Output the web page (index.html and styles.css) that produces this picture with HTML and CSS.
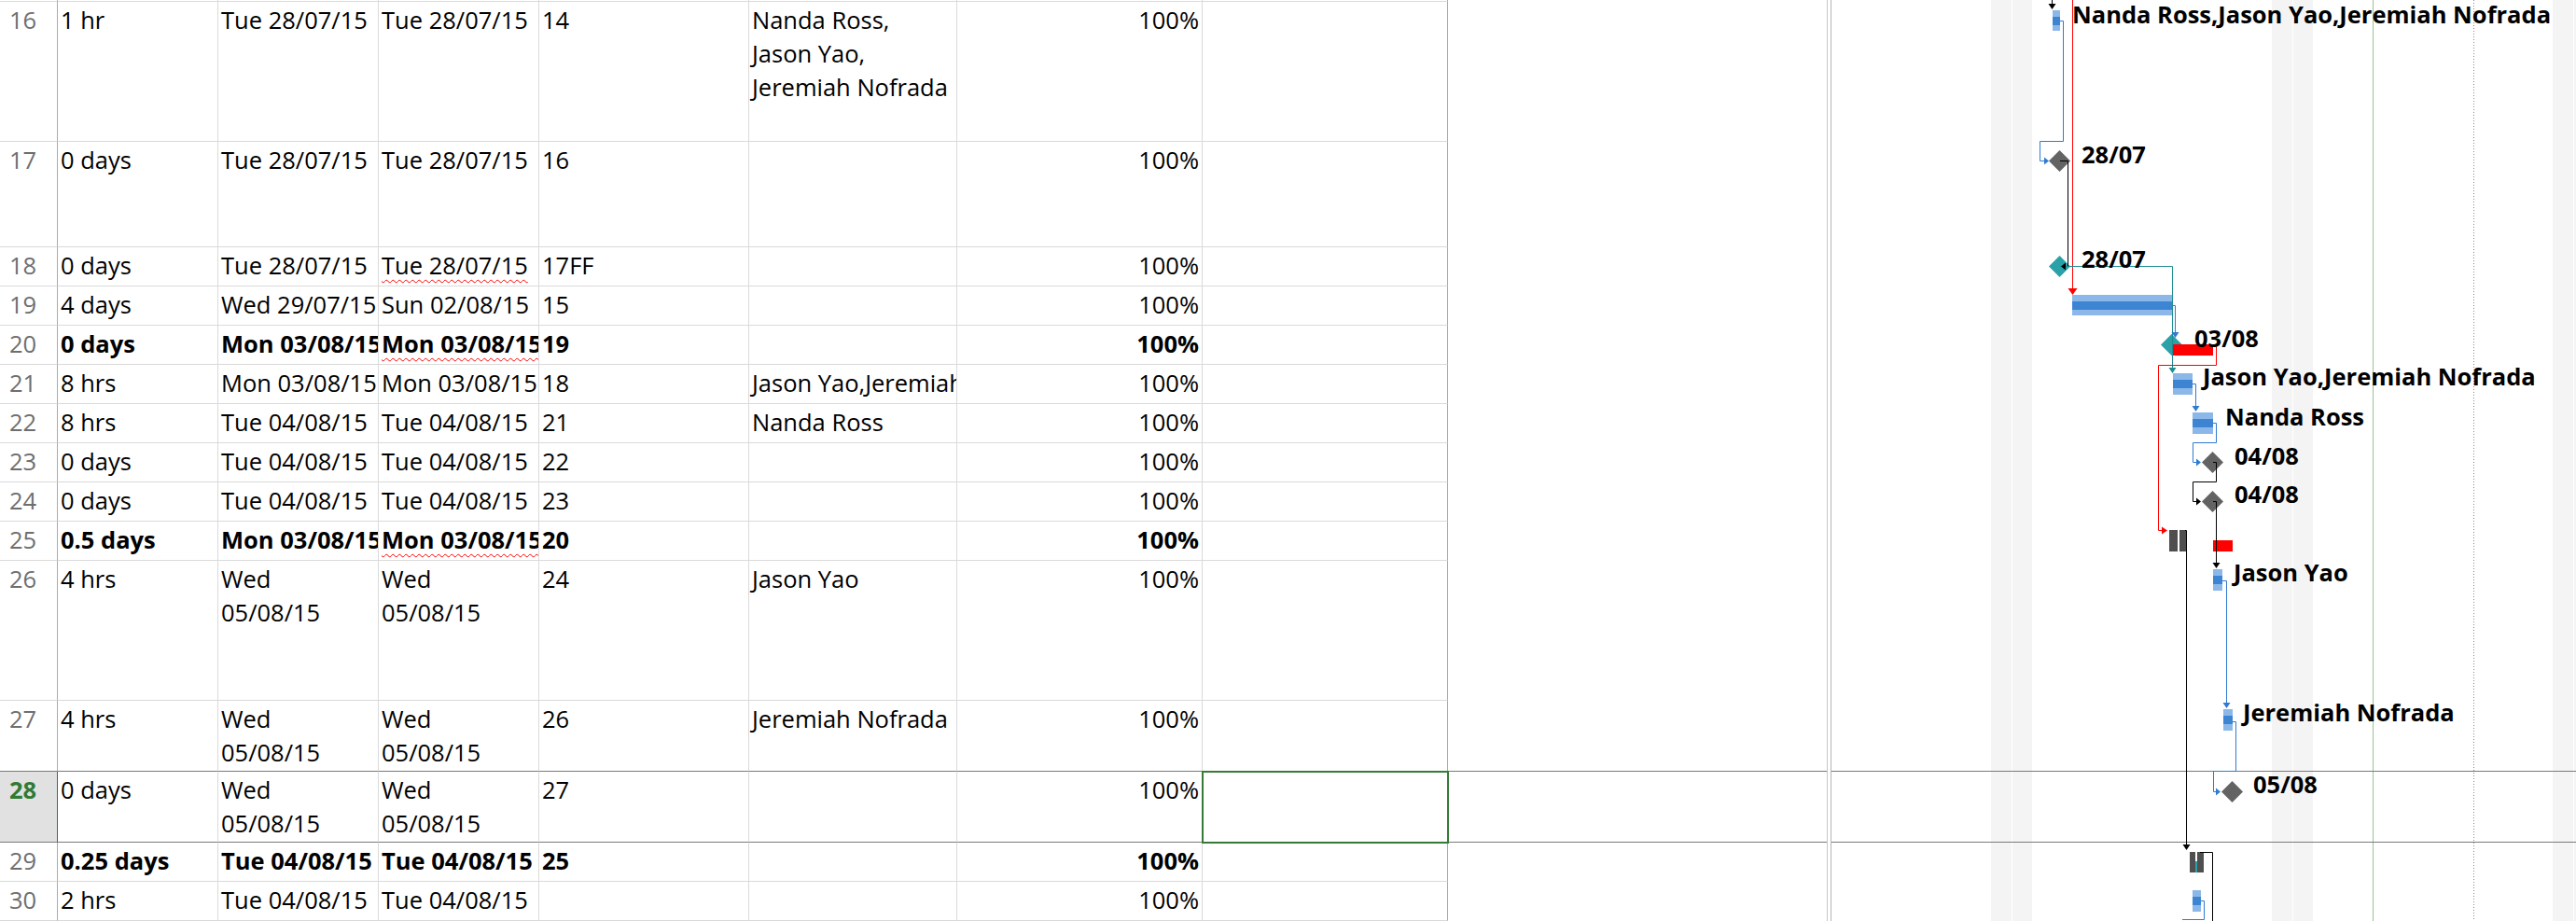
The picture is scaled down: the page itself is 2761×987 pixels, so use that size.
FILE: index.html
```html
<!DOCTYPE html>
<html>
<head>
<meta charset="utf-8">
<title>Gantt</title>
<link rel="stylesheet" href="styles.css">
</head>
<body>
<div class="app">
  <div class="sheet">
    <div class="row r2"><div class="c id"></div><div class="c dur"></div><div class="c start"></div><div class="c fin"></div><div class="c pred"></div><div class="c res"></div><div class="c pct"></div><div class="c add"></div><div class="c blank"></div></div>

    <div class="row r150"><div class="c id">16</div><div class="c dur">1 hr</div><div class="c start">Tue 28/07/15</div><div class="c fin">Tue 28/07/15</div><div class="c pred">14</div><div class="c res">Nanda Ross,<br>Jason Yao,<br>Jeremiah Nofrada</div><div class="c pct">100%</div><div class="c add"></div><div class="c blank"></div></div>

    <div class="row r113"><div class="c id">17</div><div class="c dur">0 days</div><div class="c start">Tue 28/07/15</div><div class="c fin">Tue 28/07/15</div><div class="c pred">16</div><div class="c res"></div><div class="c pct">100%</div><div class="c add"></div><div class="c blank"></div></div>

    <div class="row r42"><div class="c id">18</div><div class="c dur">0 days</div><div class="c start">Tue 28/07/15</div><div class="c fin"><span class="spell">Tue 28/07/15</span></div><div class="c pred">17FF</div><div class="c res"></div><div class="c pct">100%</div><div class="c add"></div><div class="c blank"></div></div>

    <div class="row r42"><div class="c id">19</div><div class="c dur">4 days</div><div class="c start">Wed 29/07/15</div><div class="c fin">Sun 02/08/15</div><div class="c pred">15</div><div class="c res"></div><div class="c pct">100%</div><div class="c add"></div><div class="c blank"></div></div>

    <div class="row r42 bold"><div class="c id">20</div><div class="c dur">0 days</div><div class="c start">Mon 03/08/15</div><div class="c fin"><span class="spell">Mon 03/08/15</span></div><div class="c pred">19</div><div class="c res"></div><div class="c pct">100%</div><div class="c add"></div><div class="c blank"></div></div>

    <div class="row r42"><div class="c id">21</div><div class="c dur">8 hrs</div><div class="c start">Mon 03/08/15</div><div class="c fin">Mon 03/08/15</div><div class="c pred">18</div><div class="c res">Jason Yao,Jeremiah Nofrada</div><div class="c pct">100%</div><div class="c add"></div><div class="c blank"></div></div>

    <div class="row r42"><div class="c id">22</div><div class="c dur">8 hrs</div><div class="c start">Tue 04/08/15</div><div class="c fin">Tue 04/08/15</div><div class="c pred">21</div><div class="c res">Nanda Ross</div><div class="c pct">100%</div><div class="c add"></div><div class="c blank"></div></div>

    <div class="row r42"><div class="c id">23</div><div class="c dur">0 days</div><div class="c start">Tue 04/08/15</div><div class="c fin">Tue 04/08/15</div><div class="c pred">22</div><div class="c res"></div><div class="c pct">100%</div><div class="c add"></div><div class="c blank"></div></div>

    <div class="row r42"><div class="c id">24</div><div class="c dur">0 days</div><div class="c start">Tue 04/08/15</div><div class="c fin">Tue 04/08/15</div><div class="c pred">23</div><div class="c res"></div><div class="c pct">100%</div><div class="c add"></div><div class="c blank"></div></div>

    <div class="row r42 bold"><div class="c id">25</div><div class="c dur">0.5 days</div><div class="c start">Mon 03/08/15</div><div class="c fin"><span class="spell">Mon 03/08/15</span></div><div class="c pred">20</div><div class="c res"></div><div class="c pct">100%</div><div class="c add"></div><div class="c blank"></div></div>

    <div class="row r150"><div class="c id">26</div><div class="c dur">4 hrs</div><div class="c start">Wed<br>05/08/15</div><div class="c fin">Wed<br>05/08/15</div><div class="c pred">24</div><div class="c res">Jason Yao</div><div class="c pct">100%</div><div class="c add"></div><div class="c blank"></div></div>

    <div class="row r76 presel"><div class="c id">27</div><div class="c dur">4 hrs</div><div class="c start">Wed<br>05/08/15</div><div class="c fin">Wed<br>05/08/15</div><div class="c pred">26</div><div class="c res">Jeremiah Nofrada</div><div class="c pct">100%</div><div class="c add"></div><div class="c blank"></div></div>

    <div class="row r76 sel"><div class="c id">28</div><div class="c dur">0 days</div><div class="c start">Wed<br>05/08/15</div><div class="c fin">Wed<br>05/08/15</div><div class="c pred">27</div><div class="c res"></div><div class="c pct">100%</div><div class="c add cur"></div><div class="c blank"></div></div>

    <div class="row r42 bold"><div class="c id">29</div><div class="c dur">0.25 days</div><div class="c start">Tue 04/08/15</div><div class="c fin">Tue 04/08/15</div><div class="c pred">25</div><div class="c res"></div><div class="c pct">100%</div><div class="c add"></div><div class="c blank"></div></div>

    <div class="row r42"><div class="c id">30</div><div class="c dur">2 hrs</div><div class="c start">Tue 04/08/15</div><div class="c fin">Tue 04/08/15</div><div class="c pred"></div><div class="c res"></div><div class="c pct">100%</div><div class="c add"></div><div class="c blank"></div></div>
  </div>

  <div class="splitter"></div>

  <div class="gantt">
    <svg class="chart" viewBox="1963 0 798 987" width="798" height="987" xmlns="http://www.w3.org/2000/svg">
      <!-- non-working time bands -->
      <g fill="#f4f4f4">
        <rect x="2134" y="0" width="22" height="987"/>
        <rect x="2157" y="0" width="21" height="987"/>
        <rect x="2435" y="0" width="22" height="987"/>
        <rect x="2458" y="0" width="21" height="987"/>
        <rect x="2736" y="0" width="22" height="987"/>
        <rect x="2759" y="0" width="2" height="987"/>
      </g>
      <line x1="2543.5" y1="0" x2="2543.5" y2="987" stroke="#98c498" stroke-width="1"/>
      <line x1="2651.5" y1="0" x2="2651.5" y2="987" stroke="#8a8a8a" stroke-width="1" stroke-dasharray="1 2"/>
      <g stroke="#7a7a7a" stroke-width="1" shape-rendering="crispEdges">
        <line x1="1963" y1="826.5" x2="2761" y2="826.5"/>
        <line x1="1963" y1="902.5" x2="2761" y2="902.5"/>
      </g>

      <!-- task bars -->
      <g shape-rendering="crispEdges">
        <rect x="2200" y="11" width="8" height="22" fill="#8bb8e8"/>
        <rect x="2200" y="18" width="8" height="9" fill="#3d85d3"/>

        <rect x="2221" y="316" width="107" height="22" fill="#8bb8e8"/>
        <rect x="2221" y="323" width="107" height="9" fill="#3d85d3"/>

        <rect x="2329" y="400" width="21" height="23" fill="#8bb8e8"/>
        <rect x="2329" y="407" width="21" height="9" fill="#3d85d3"/>

        <rect x="2350" y="442" width="22" height="23" fill="#8bb8e8"/>
        <rect x="2350" y="449" width="22" height="9" fill="#3d85d3"/>

        <rect x="2372" y="610" width="10" height="23" fill="#8bb8e8"/>
        <rect x="2372" y="617" width="10" height="9" fill="#3d85d3"/>

        <rect x="2383" y="760" width="10" height="23" fill="#8bb8e8"/>
        <rect x="2383" y="767" width="10" height="9" fill="#3d85d3"/>

        <rect x="2350" y="954" width="9" height="23" fill="#8bb8e8"/>
        <rect x="2350" y="961" width="9" height="9" fill="#3d85d3"/>

        <!-- summary bars -->
        <rect x="2325" y="568" width="9" height="23" fill="#4f4f4f"/>
        <rect x="2336" y="568" width="7" height="23" fill="#4f4f4f"/>
        <rect x="2347" y="913" width="15" height="22" fill="#4f4f4f"/>
        <rect x="2353" y="913" width="2" height="10" fill="#ffffff"/>
        <rect x="2353" y="923" width="2" height="12" fill="#2aa0a6"/>
      </g>

      <!-- milestones -->
      <polygon points="2207.5,161 2219,172.5 2207.5,184 2196,172.5" fill="#636363"/>
      <polygon points="2207.5,274 2219,285.5 2207.5,297 2196,285.5" fill="#29a1a7"/>
      <polygon points="2327.5,358 2339,369.5 2327.5,381 2316,369.5" fill="#29a1a7"/>
      <polygon points="2371.5,484 2383,495.5 2371.5,507 2360,495.5" fill="#636363"/>
      <polygon points="2371.5,526 2383,537.5 2371.5,549 2360,537.5" fill="#636363"/>
      <polygon points="2392.5,837 2404,848.5 2392.5,860 2381,848.5" fill="#636363"/>

      <!-- slack bars -->
      <g fill="#ff0000" shape-rendering="crispEdges">
        <rect x="2329" y="369" width="43" height="12"/>
        <rect x="2372" y="579" width="21" height="12"/>
      </g>

      <!-- links -->
      <g fill="none" stroke-width="1">
        <path d="M2199.5 0 V6" stroke="#000"/>
        <path d="M2208 22.5 H2211.5 V151.5 H2186.5 V172.5 H2192" stroke="#2f7bd2"/>
        <path d="M2221.5 0 V310" stroke="#ff0000"/>
        <path d="M2208 172.5 H2216.5 V285.5 H2213" stroke="#000"/>
        <path d="M2208 285.5 H2328.5 V395" stroke="#1d8c93"/>
        <path d="M2328 327.5 H2331.5 V357" stroke="#2f7bd2"/>
        <path d="M2372 370.5 H2375.5 V391.5 H2313.5 V568.5 H2318" stroke="#ff0000"/>
        <path d="M2350 411.5 H2353.5 V436" stroke="#2f7bd2"/>
        <path d="M2372 453.5 H2375.5 V474.5 H2350.5 V495.5 H2355" stroke="#2f7bd2"/>
        <path d="M2372 495.5 H2375.5 V516.5 H2350.5 V537.5 H2355" stroke="#000"/>
        <path d="M2372 537.5 H2375.5 V603" stroke="#000"/>
        <path d="M2382 622.5 H2386.5 V753" stroke="#2f7bd2"/>
        <path d="M2393 773.5 H2396.5 V826.5 H2372.5 V848.5 H2376" stroke="#2f7bd2"/>
        <path d="M2342 568.5 H2343.5 V905" stroke="#000"/>
        <path d="M2358 913.5 H2371.5 V987" stroke="#000"/>
        <path d="M2359 965.5 H2362.5 V985.5 H2339" stroke="#2f7bd2"/>
      </g>
      <!-- arrowheads -->
      <polygon points="2195.5,4 2203.5,4 2199.5,10" fill="#000"/>
      <polygon points="2191,168.5 2191,176.5 2196,172.5" fill="#2f7bd2"/>
      <polygon points="2216.5,309 2226.5,309 2221.5,316" fill="#ff0000"/>
      <polygon points="2214,281.5 2214,289.5 2209,285.5" fill="#000"/>
      <polygon points="2324.5,394 2332.5,394 2328.5,400" fill="#1d8c93"/>
      <polygon points="2327.5,356 2335.5,356 2331.5,362" fill="#2f7bd2"/>
      <polygon points="2317,564.5 2317,572.5 2323,568.5" fill="#ff0000"/>
      <polygon points="2349.5,435 2357.5,435 2353.5,441" fill="#2f7bd2"/>
      <polygon points="2354,491.5 2354,499.5 2359,495.5" fill="#2f7bd2"/>
      <polygon points="2354,533.5 2354,541.5 2359,537.5" fill="#000"/>
      <polygon points="2371.5,603 2379.5,603 2375.5,609" fill="#000"/>
      <polygon points="2382.5,753 2390.5,753 2386.5,759" fill="#2f7bd2"/>
      <polygon points="2375,844.5 2375,852.5 2380,848.5" fill="#2f7bd2"/>
      <polygon points="2339.5,905 2347.5,905 2343.5,911" fill="#000"/>

      <!-- labels -->
      <g class="glabel">
        <text x="2221" y="25">Nanda Ross,Jason Yao,Jeremiah Nofrada</text>
        <text x="2231" y="175">28/07</text>
        <text x="2231" y="287">28/07</text>
        <text x="2352" y="372">03/08</text>
        <text x="2361" y="413">Jason Yao,Jeremiah Nofrada</text>
        <text x="2385" y="456">Nanda Ross</text>
        <text x="2395" y="498">04/08</text>
        <text x="2395" y="539">04/08</text>
        <text x="2394" y="623">Jason Yao</text>
        <text x="2404" y="773">Jeremiah Nofrada</text>
        <text x="2415" y="850">05/08</text>
      </g>
    </svg>
  </div>
</div>
</body>
</html>
```

FILE: styles.css
```css
html, body {
  margin: 0;
  padding: 0;
  background: #ffffff;
}

body {
  width: 2761px;
  height: 987px;
  overflow: hidden;
  font-family: "Open Sans", "Liberation Sans", sans-serif;
  font-size: 25.5px;
  color: #000;
}

.app {
  display: flex;
  height: 987px;
}

.sheet {
  width: 1958px;
  display: flex;
  flex-direction: column;
}

.row {
  display: flex;
  flex: none;
}

.r2 { height: 2px; }
.r42 { height: 42px; }
.r76 { height: 76px; }
.r113 { height: 113px; }
.r150 { height: 150px; }

.c {
  box-sizing: border-box;
  height: 100%;
  flex: none;
  border-right: 1px solid #dadada;
  border-bottom: 1px solid #dadada;
  padding: 1px 3px 0 3px;
  white-space: nowrap;
  overflow: hidden;
  line-height: 36px;
}

.id {
  width: 62px;
  padding-left: 10px;
  color: #6e6e6e;
  border-right-color: #ababab;
}

.dur, .start, .fin { width: 172px; }
.pred { width: 225px; }
.res { width: 223px; }
.pct { width: 263px; text-align: right; }
.add { width: 263px; border-right-color: #a8a8a8; }

.blank {
  flex: 1;
  border-right: none;
  border-bottom-color: transparent;
}

.bold .c { font-weight: 700; }
.bold .id { font-weight: 400; }

.presel .c,
.sel .c {
  border-bottom-color: #7a7a7a;
}

.sel .id {
  background: #e1e1e1;
  color: #2f7a34;
  font-weight: 700;
  border-right-color: #2f7a34;
}

.cur {
  position: relative;
  outline: 2px solid #357a37;
  outline-offset: -1px;
}

.spell {
  text-decoration-line: underline;
  text-decoration-style: wavy;
  text-decoration-color: #ff0000;
  text-decoration-thickness: 1px;
  text-underline-offset: 5px;
}

.splitter {
  box-sizing: border-box;
  width: 5px;
  flex: none;
  border-left: 1px solid #c8c8c8;
  border-right: 1px solid #b4b4b4;
  background: #ffffff;
}

.gantt {
  width: 798px;
  flex: none;
  height: 987px;
}

.chart {
  display: block;
}

.glabel text {
  font-family: "Open Sans", "Liberation Sans", sans-serif;
  font-weight: 700;
  font-size: 25.5px;
  fill: #000;
}
```
